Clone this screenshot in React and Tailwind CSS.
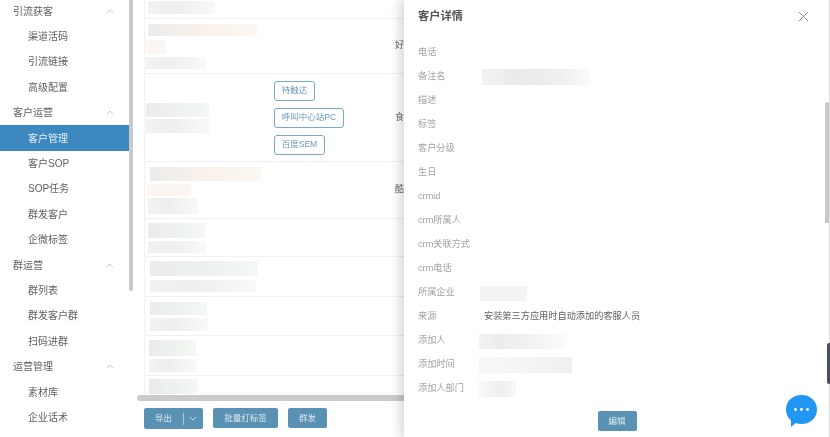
import React from 'react';

const font = 'font-["Liberation_Sans","Noto_Sans_CJK_SC",sans-serif]';

function Chevron() {
  return (
    <svg width="8" height="5" viewBox="0 0 8 5" fill="none" className="mr-[15px]">
      <path d="M1 4 L4 1 L7 4" stroke="#c4c4c4" strokeWidth="0.9" />
    </svg>
  );
}

const menu = [
  ['引流获客', ['渠道活码', '引流链接', '高级配置']],
  ['客户运营', ['客户管理', '客户SOP', 'SOP任务', '群发客户', '企微标签']],
  ['群运营', ['群列表', '群发客户群', '扫码进群']],
  ['运营管理', ['素材库', '企业话术']],
];

function Sidebar() {
  return (
    <div className="w-[129px] shrink-0 -mt-[1.5px] text-[10px] text-[#5f5f5f]">
      {menu.map(([group, items]) => (
        <div key={group}>
          <div className="h-[25.4px] flex items-center justify-between pl-[13px]">
            <span>{group}</span>
            <Chevron />
          </div>
          {items.map((it) => (
            <div
              key={it}
              className={
                it === '客户管理'
                  ? 'h-[25.4px] flex items-center pl-[28px] bg-[#3c88bf] text-[#e8f1f7]'
                  : 'h-[25.4px] flex items-center pl-[28px]'
              }
            >
              {it}
            </div>
          ))}
        </div>
      ))}
    </div>
  );
}

const G = 'bg-[linear-gradient(90deg,#f2f2f2,#eeeeee_40%,#f9f9f9)]';
const GG = 'bg-[linear-gradient(90deg,#ebebeb,#eef3ef_60%,#f5f8f5)]';
const GP = 'bg-[linear-gradient(90deg,#ececec,#f9f1ea_50%,#fcf7f2)]';
const P = 'bg-[#fbf6f1]';

function Tag({ children, w }) {
  return (
    <div className={`${w} h-[20px] rounded-[3px] border border-[#78abcb] flex items-center justify-center text-[8.5px] text-[#6499bb]`}>
      {children}
    </div>
  );
}

function Row({ h, mark, children, tags }) {
  return (
    <div className={`${h} shrink-0 flex items-center border-b border-[#eff0f8]`}>
      <div className="w-[129px] shrink-0 flex flex-col">{children}</div>
      {tags ? <div className="w-[121px] shrink-0 flex flex-col gap-[7px]">{tags}</div> : <div className="w-[121px] shrink-0" />}
      <span className="text-[9px] text-[#666]">{mark}</span>
    </div>
  );
}

function Table() {
  return (
    <div className="h-[395px] ml-[7px] border-l border-[#eff0f8] overflow-hidden flex flex-col">
      <Row h="h-[19px]">
        <div className={`ml-[3px] -mt-[3px] w-[67px] h-[13px] ${G}`} />
      </Row>
      <Row h="h-[55px]" mark="好">
        <div className={`ml-[3px] w-[109px] h-[12px] ${GP}`} />
        <div className={`ml-[1px] mt-[4px] w-[20px] h-[14px] ${P}`} />
        <div className={`ml-[1px] mt-[3px] w-[60px] h-[12px] ${G}`} />
      </Row>
      <Row
        h="h-[88px]"
        mark="食"
        tags={
          <>
            <Tag w="w-[41px]">待触达</Tag>
            <Tag w="w-[70px]">呼叫中心站PC</Tag>
            <Tag w="w-[51px]">百度SEM</Tag>
          </>
        }
      >
        <div className={`ml-[1px] w-[63px] h-[14px] ${GG}`} />
        <div className={`ml-[1px] mt-[2px] w-[64px] h-[14px] ${G}`} />
      </Row>
      <Row h="h-[57px]" mark="酷">
        <div className={`ml-[5px] w-[111px] h-[14px] ${GP}`} />
        <div className={`ml-[2px] mt-[3px] w-[44px] h-[12px] ${P}`} />
        <div className={`ml-[3px] mt-[2px] w-[50px] h-[16px] ${G}`} />
      </Row>
      <Row h="h-[38px]">
        <div className={`ml-[3px] w-[57px] h-[15px] ${GG}`} />
        <div className={`ml-[3px] mt-[3px] w-[58px] h-[12px] ${G}`} />
      </Row>
      <Row h="h-[40px]">
        <div className={`ml-[5px] w-[108px] h-[15px] ${GG}`} />
        <div className={`ml-[5px] mt-[4px] w-[106px] h-[12px] ${G}`} />
      </Row>
      <Row h="h-[39px]">
        <div className={`ml-[5px] w-[57px] h-[13px] ${GG}`} />
        <div className={`ml-[5px] mt-[3px] w-[58px] h-[13px] ${G}`} />
      </Row>
      <Row h="h-[40px]">
        <div className={`ml-[4px] w-[47px] h-[16px] ${GG}`} />
        <div className={`ml-[4px] mt-[3px] w-[48px] h-[13px] ${G}`} />
      </Row>
      <div className="pt-[3px]">
        <div className={`ml-[4px] w-[49px] h-[15px] ${GG}`} />
      </div>
    </div>
  );
}

function Btn({ w, children }) {
  return (
    <div className={`${w} h-[20px] rounded-[2px] bg-[#5a92b3] text-[#dbe8ef] text-[8.5px] flex items-center justify-center`}>
      {children}
    </div>
  );
}

function Toolbar() {
  return (
    <div className="ml-[7px] mt-[7px] flex gap-[10px]">
      <div className="w-[59px] h-[21px] rounded-[2px] bg-[#5a92b3] text-[#dbe8ef] text-[8.5px] flex items-center">
        <span className="w-[39px] text-center">导出</span>
        <span className="w-px h-[12px] bg-[#a9c8da]" />
        <svg width="8" height="5" viewBox="0 0 8 5" fill="none" className="ml-[5px]">
          <path d="M1 1 L4 4 L7 1" stroke="#dbe8ef" strokeWidth="0.9" />
        </svg>
      </div>
      <Btn w="w-[65px]">批量打标签</Btn>
      <Btn w="w-[39px]">群发</Btn>
    </div>
  );
}

const fields = [
  ['电话'],
  ['备注名', 'ml-[-2px] w-[109px] h-[16px] bg-[linear-gradient(90deg,#f2f2f2,#ebebeb_30%,#eeeeee_70%,#fbfbfb)]'],
  ['描述'],
  ['标签'],
  ['客户分级'],
  ['生日'],
  ['crmid'],
  ['crm所属人'],
  ['crm关联方式'],
  ['crm电话'],
  ['所属企业', 'ml-[-4px] w-[47px] h-[15px] bg-[#f3f3f3]'],
  ['来源', null, '安装第三方应用时自动添加的客服人员'],
  ['添加人', 'ml-[-5px] w-[87px] h-[15px] bg-[linear-gradient(90deg,#f2f2f2,#ececec_25%,#f4f4f4_70%,#fbfbfb)]'],
  ['添加时间', 'ml-[-5px] w-[93px] h-[16px] bg-[linear-gradient(90deg,#f6f6f6,#f4f4f4_60%,#f0f0f0)]'],
  ['添加人部门', 'ml-[-6px] w-[38px] h-[16px] bg-[linear-gradient(90deg,#fafafa,#eeeeee_60%,#f8f8f8)]'],
];

function Drawer() {
  return (
    <div className="absolute top-0 right-0 bottom-0 w-[426px] bg-white shadow-[-4px_0_10px_rgba(0,0,0,0.16)] flex flex-col">
      <div className="h-[33px] mb-[8px] px-[14px] flex items-center justify-between">
        <span className="text-[11.25px] font-bold text-[#555]">客户详情</span>
        <svg width="11" height="11" viewBox="0 0 11 11" fill="none" className="mr-[7px]">
          <path d="M1 1 L10 10 M10 1 L1 10" stroke="#8a8f99" strokeWidth="1" />
        </svg>
      </div>
      <div className="pl-[14px]">
        {fields.map(([label, blur, value]) => (
          <div key={label} className="h-[24px] flex items-center text-[9.2px]">
            <span className="w-[66px] shrink-0 text-[#a3a3a3]">{label}</span>
            {blur && <div className={blur} />}
            {value && <span className="text-[#5f5f5f]">{value}</span>}
          </div>
        ))}
      </div>
      <div className="mt-[10px] flex justify-center">
        <Btn w="w-[39px]">编辑</Btn>
      </div>
    </div>
  );
}

export default function App() {
  return (
    <div className={`relative w-[830px] h-[437px] overflow-hidden bg-white flex ${font} blur-[0.5px]`}>
      <Sidebar />
      <div className="w-[5px] shrink-0">
        <div className="w-[4px] h-[291px] bg-[#c9c9c9] rounded-b-[2px]" />
      </div>
      <div className="w-[3px] shrink-0" />
      <div className="flex-1 min-w-0">
        <Table />
        <div className="h-[6px] bg-[#cbcbcb] rounded-l-[3px]" />
        <Toolbar />
      </div>
      <Drawer />
      <div className="absolute right-0 top-0 bottom-0 w-px bg-[#dcdcdc]" />
      <div className="absolute right-[1px] top-[102px] w-[4px] h-[121px] bg-[#c8c8c8] rounded-t-[2px]" />
      <div className="absolute right-0 top-[343px] w-[3px] h-[41px] bg-[#4a4f60] rounded-l-[2px]" />
      <svg className="absolute left-[785px] top-[394px]" width="33" height="36" viewBox="0 0 33 36">
        <path d="M16.5 1 C25.6 1 32 7.2 32 15.5 C32 23.8 25.6 30 16.5 30 C14.5 30 12.5 29.7 10.8 29.1 L6 33 L6 26.6 C2.8 23.8 1 20 1 15.5 C1 7.2 7.4 1 16.5 1 Z" fill="#2196f3" />
        <circle cx="10.5" cy="15.5" r="1.4" fill="#fff" />
        <circle cx="16.5" cy="15.5" r="1.4" fill="#fff" />
        <circle cx="22.5" cy="15.5" r="1.4" fill="#fff" />
      </svg>
    </div>
  );
}
